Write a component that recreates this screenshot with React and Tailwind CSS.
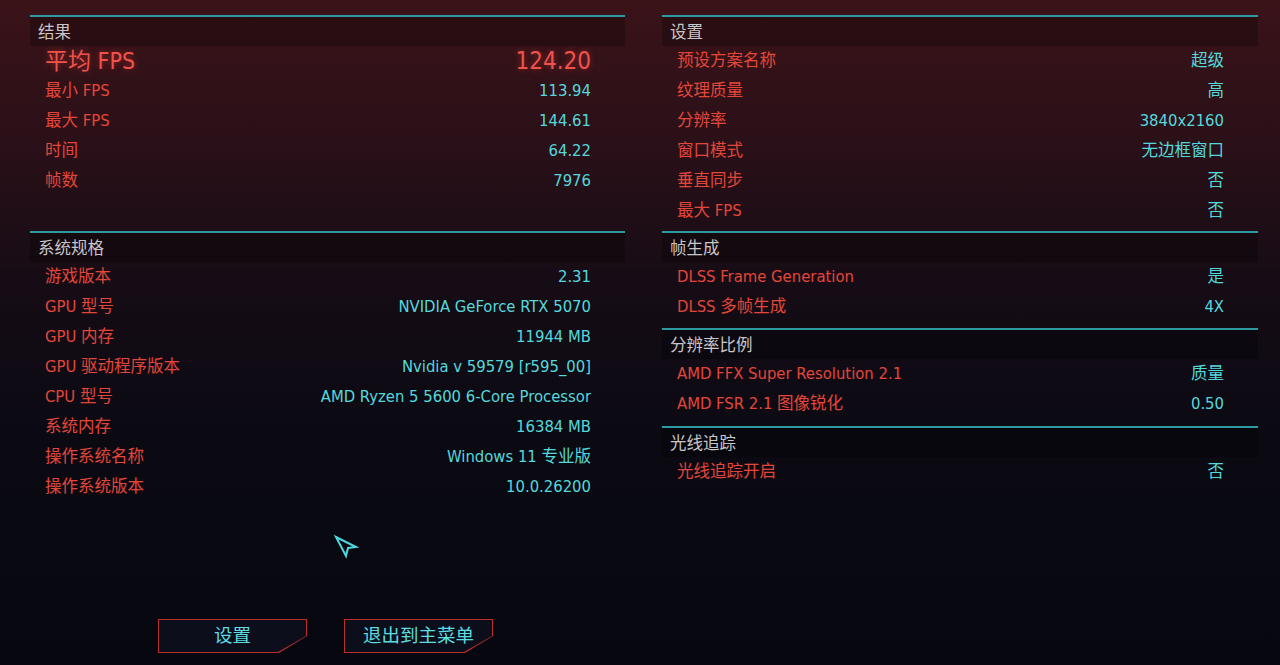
import React from 'react';

const font = "font-['Liberation_Sans_Narrow','DejaVu_Sans_Condensed','Noto_Sans_CJK_SC',sans-serif]";

const results = [
  ['最小 FPS', '113.94'],
  ['最大 FPS', '144.61'],
  ['时间', '64.22'],
  ['帧数', '7976'],
];

const specs = [
  ['游戏版本', '2.31'],
  ['GPU 型号', 'NVIDIA GeForce RTX 5070'],
  ['GPU 内存', '11944 MB'],
  ['GPU 驱动程序版本', 'Nvidia v 59579 [r595_00]'],
  ['CPU 型号', 'AMD Ryzen 5 5600 6-Core Processor'],
  ['系统内存', '16384 MB'],
  ['操作系统名称', 'Windows 11 专业版'],
  ['操作系统版本', '10.0.26200'],
];

const settings = [
  ['预设方案名称', '超级'],
  ['纹理质量', '高'],
  ['分辨率', '3840x2160'],
  ['窗口模式', '无边框窗口'],
  ['垂直同步', '否'],
  ['最大 FPS', '否'],
];

const frameGen = [
  ['DLSS Frame Generation', '是'],
  ['DLSS 多帧生成', '4X'],
];

const scaling = [
  ['AMD FFX Super Resolution 2.1', '质量'],
  ['AMD FSR 2.1 图像锐化', '0.50'],
];

const rayTracing = [['光线追踪开启', '否']];

const Row = ({ label, value }) => (
  <div className="flex h-[30px] items-center justify-between pl-[15px] pr-[34px] text-[16.5px]">
    <span className="text-[#e4463a]">{label}</span>
    <span className="text-[#55d8dc]">{value}</span>
  </div>
);

const Section = ({ title, rows, className = '', children }) => (
  <div className={className}>
    <div className="h-[2px] bg-[#2c9a9e]" />
    <div className="flex h-[29px] items-center bg-black/25 px-2 pt-[3px] text-[16.5px] text-[#c8c6c8]">
      {title}
    </div>
    {children}
    {rows.map(([l, v]) => (
      <Row key={l} label={l} value={v} />
    ))}
  </div>
);

const CutButton = ({ children }) => (
  <div className="h-[34px] w-[149px] bg-[#b8302e] p-px [clip-path:polygon(0_0,100%_0,100%_50%,calc(100%-28px)_100%,0_100%)]">
    <div className="flex h-full w-full items-center justify-center bg-[#0d0e1b] text-[18.5px] text-[#5cdde0] [clip-path:polygon(0_0,100%_0,100%_50%,calc(100%-28px)_100%,0_100%)]">
      {children}
    </div>
  </div>
);

export default function App() {
  return (
    <div
      className={`relative flex h-[665px] w-[1280px] flex-col overflow-hidden bg-[linear-gradient(180deg,#3a1318_0%,#2a1018_22%,#160c15_42%,#0b0a13_65%,#07080f_100%)] ${font}`}
    >
      <div className="flex gap-[37px] pl-[30px] pt-[15px]">
        {/* left column */}
        <div className="w-[595px]">
          <Section title="结果" rows={results}>
            <div className="flex h-[30px] items-center justify-between pl-[15px] pr-[34px] text-[23px] text-[#f2514a] [text-shadow:0_0_6px_rgba(255,70,60,0.45)]">
              <span>平均 FPS</span>
              <span className="text-[24px]">124.20</span>
            </div>
          </Section>
          <Section title="系统规格" rows={specs} className="mt-[35px]" />
        </div>

        {/* right column */}
        <div className="w-[596px]">
          <Section title="设置" rows={settings} />
          <Section title="帧生成" rows={frameGen} className="mt-[5px]" />
          <Section title="分辨率比例" rows={scaling} className="mt-[6px]" />
          <Section title="光线追踪" rows={rayTracing} className="mt-[7px]" />
        </div>
      </div>

      <div className="mt-auto flex gap-[37px] pb-[12px] pl-[158px]">
        <CutButton>设置</CutButton>
        <CutButton>退出到主菜单</CutButton>
      </div>

      {/* mouse cursor */}
      <svg className="absolute left-[332px] top-[533px]" width="28" height="28" viewBox="0 0 28 28">
        <path d="M4 4 L24 14 L16 15 L14 23 Z" fill="none" stroke="#4fd6dc" strokeWidth="2" strokeLinejoin="miter" />
      </svg>
    </div>
  );
}
